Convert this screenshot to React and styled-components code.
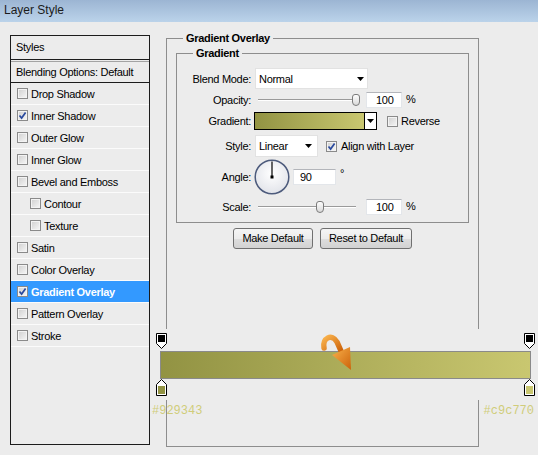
import styled, { createGlobalStyle } from 'styled-components';

const GlobalStyle = createGlobalStyle`
  html, body {
    margin: 0;
    padding: 0;
  }
  body {
    background: #ececec;
    font-family: "Liberation Sans", Arial, sans-serif;
    font-size: 11px;
    letter-spacing: -0.3px;
    color: #000;
  }
`;

const styleItems = [
  { label: 'Drop Shadow' },
  { label: 'Inner Shadow', checked: true },
  { label: 'Outer Glow' },
  { label: 'Inner Glow' },
  { label: 'Bevel and Emboss' },
  { label: 'Contour', indent: true },
  { label: 'Texture', indent: true },
  { label: 'Satin' },
  { label: 'Color Overlay' },
  { label: 'Gradient Overlay', checked: true, active: true },
  { label: 'Pattern Overlay' },
  { label: 'Stroke' },
];

const Window = styled.div`
  width: 538px;
  height: 455px;
  overflow: hidden;
  background: #ececec;
`;

const TitleBar = styled.div`
  height: 22px;
  line-height: 21px;
  padding-left: 4px;
  background: linear-gradient(#9cb5d3, #bbd3ea);
  font-size: 12px;
  letter-spacing: 0;
  color: #1b1b1b;
`;

const Content = styled.div`
  display: flex;
  align-items: flex-start;
  padding: 13px 0 0 10px;
`;

const StylesPanel = styled.div`
  width: 140px;
  height: 410px;
  box-sizing: border-box;
  border: 1px solid #1c1c1c;
`;

const PanelHeader = styled.div`
  height: 23px;
  line-height: 23px;
  padding-left: 5px;
  border-bottom: 1px solid #1c1c1c;
`;

const BlendingRow = styled.div`
  margin-top: 1px;
  height: 20px;
  line-height: 20px;
  padding-left: 5px;
  border-top: 1px solid #a3a3a3;
  border-bottom: 1px solid #1c1c1c;
`;

const StyleRow = styled.div`
  display: flex;
  align-items: center;
  gap: 3px;
  height: 21px;
  padding-left: ${(p) => (p.$indent ? 19 : 6)}px;
  border-bottom: 1px solid #fbfbfb;
  background: ${(p) => (p.$active ? '#3399ff' : 'transparent')};
  color: ${(p) => (p.$active ? '#fff' : '#000')};
  font-weight: ${(p) => (p.$active ? 'bold' : 'normal')};
`;

const Box = styled.span`
  display: inline-flex;
  align-items: center;
  justify-content: center;
  flex-shrink: 0;
  width: 11px;
  height: 11px;
  box-sizing: border-box;
  border: 1px solid #8a8a8a;
  box-shadow: inset 0 0 0 1px #f3f3f3;
  background: linear-gradient(135deg, #cfcfcf, #f7f7f7);
  margin-left: ${(p) => p.$ml || 0}px;
`;

const Checkbox = ({ checked, ml }) => (
  <Box $ml={ml}>
    {checked && (
      <svg width="9" height="9" viewBox="0 0 9 9">
        <path d="M1.5 4.5 L3.6 7 L7.6 1.4" fill="none" stroke="#2a4a9e" strokeWidth="1.7" />
      </svg>
    )}
  </Box>
);

const RightColumn = styled.div`
  margin: 3px 0 0 16px;
`;

const Group = styled.div`
  position: relative;
  box-sizing: border-box;
  width: ${(p) => p.$w}px;
  height: ${(p) => p.$h}px;
  border: 1px solid #8d8d8d;
  padding: 14px ${(p) => p.$px || 0}px 0;
`;

const Legend = styled.span`
  position: absolute;
  top: -7px;
  left: 16px;
  padding: 0 3px;
  line-height: 13px;
  background: #ececec;
  font-weight: bold;
`;

const Row = styled.div`
  display: flex;
  align-items: center;
  height: ${(p) => p.$h}px;
  margin-top: ${(p) => p.$mt || 0}px;
`;

const Label = styled.div`
  flex-shrink: 0;
  width: 74px;
  margin-right: 3px;
  text-align: right;
`;

const Select = styled.div`
  display: flex;
  align-items: center;
  justify-content: space-between;
  box-sizing: border-box;
  width: ${(p) => p.$w}px;
  height: ${(p) => p.$h}px;
  margin-left: 1px;
  padding: 0 ${(p) => p.$pr}px 0 3px;
  background: #fff;
  border: 1px solid #e2e2e2;
`;

const Arrow = () => (
  <svg width="7" height="4" viewBox="0 0 7 4">
    <polygon points="0,0 7,0 3.5,4" fill="#000" />
  </svg>
);

const Slider = styled.div`
  position: relative;
  width: 112px;
  height: 16px;
  flex-shrink: 0;
`;

const Track = styled.div`
  margin: 7px 0 0 4px;
  width: 98px;
  height: 0;
  border-top: 1px solid #9a9a9a;
  border-bottom: 1px solid #fff;
`;

const Thumb = styled.div`
  position: absolute;
  top: 2px;
  width: 8px;
  height: 12px;
  box-sizing: border-box;
  border: 1px solid #7b7b7b;
  border-radius: 3px 3px 4px 4px;
  background: linear-gradient(#fdfdfd, #d9d9d9);
`;

const Field = styled.div`
  box-sizing: border-box;
  width: ${(p) => p.$w}px;
  height: 16px;
  line-height: 14px;
  margin-left: ${(p) => p.$ml || 0}px;
  padding-left: ${(p) => p.$pl}px;
  background: #fff;
  border: 1px solid #e3e6ea;
  border-top-color: #b3b5ba;
`;

const Unit = styled.span`
  align-self: flex-start;
  margin: ${(p) => p.$mt}px 0 0 4px;
  line-height: 12px;
`;

const GradientField = styled.div`
  display: flex;
  box-sizing: border-box;
  width: 123px;
  height: 18px;
  border: 1px solid #000;
`;

const Swatch = styled.div`
  flex: 1;
  background: linear-gradient(to right, #929343, #c9c770);
  border-right: 1px solid #000;
`;

const DropButton = styled.div`
  display: flex;
  align-items: center;
  justify-content: center;
  width: 11px;
  background: #fff;
`;

const CheckLabel = styled.span`
  margin-left: ${(p) => p.$ml}px;
`;

const Buttons = styled.div`
  display: flex;
  justify-content: center;
  gap: 7px;
  margin-top: 5px;
`;

const Button = styled.div`
  box-sizing: border-box;
  width: ${(p) => p.$w}px;
  height: 21px;
  line-height: 19px;
  text-align: center;
  border: 1px solid #707070;
  border-radius: 3px;
  background: linear-gradient(#f5f5f5 0%, #ececec 50%, #dedede 51%, #d2d2d2 100%);
`;

const EditorWrap = styled.div`
  margin: 80px -68px 0 -26px;
`;

const EditorBox = styled.div`
  position: relative;
  padding: 4px 2px 4px 6px;
  background: #ececec;
`;

const StopRow = styled.div`
  display: flex;
  justify-content: space-between;
  height: ${(p) => p.$h}px;
`;

const Bar = styled.div`
  height: 28px;
  box-sizing: border-box;
  margin: 2px 4px 0 4px;
  border: 1px solid #8a8a8a;
  background: linear-gradient(to right, #929343, #c9c770);
`;

const HexRow = styled.div`
  display: flex;
  justify-content: space-between;
  margin-top: 4px;
  padding: 0 3px 0 2px;
  font-family: "Liberation Mono", "Courier New", monospace;
  font-size: 12px;
  letter-spacing: 0;
  line-height: 14px;
  color: #d0cc7a;
`;

const CurveArrow = styled.svg`
  position: absolute;
  left: 169px;
  top: 4px;
`;

const TopStop = () => (
  <svg width="11" height="16" viewBox="0 0 11 16">
    <path d="M0.5 0.5 H10.5 V10.5 L5.5 15.5 L0.5 10.5 Z" fill="#fff" stroke="#000" />
    <rect x="2" y="2" width="7" height="7" fill="#000" />
  </svg>
);

const BottomStop = ({ color }) => (
  <svg width="11" height="17" viewBox="0 0 11 17">
    <path d="M5.5 0.5 L10.5 5.5 V16.5 H0.5 V5.5 Z" fill="#fff" stroke="#000" />
    <rect x="2" y="7" width="7" height="8" fill={color} />
  </svg>
);

const Dial = () => (
  <svg width="36" height="36" viewBox="0 0 36 36">
    <defs>
      <radialGradient id="dialFill" cx="50%" cy="40%" r="60%">
        <stop offset="0%" stopColor="#ffffff" />
        <stop offset="100%" stopColor="#e2e4ea" />
      </radialGradient>
    </defs>
    <circle cx="18" cy="18" r="16.8" fill="url(#dialFill)" stroke="#4d5b7c" strokeWidth="1.5" />
    <line x1="18" y1="18" x2="18" y2="2.5" stroke="#000" strokeWidth="1.2" />
    <rect x="16.5" y="16.5" width="3" height="3" fill="#000" />
  </svg>
);

const App = () => {
  return (
    <Window>
      <GlobalStyle />
      <TitleBar>Layer Style</TitleBar>
      <Content>
        <StylesPanel>
          <PanelHeader>Styles</PanelHeader>
          <BlendingRow>Blending Options: Default</BlendingRow>
          {styleItems.map((item) => (
            <StyleRow key={item.label} $indent={item.indent} $active={item.active}>
              <Checkbox checked={item.checked} />
              <span>{item.label}</span>
            </StyleRow>
          ))}
        </StylesPanel>

        <RightColumn>
          <Group $w={313} $h={409} $px={9}>
            <Legend>Gradient Overlay</Legend>
            <Group $w={293} $h={170}>
              <Legend>Gradient</Legend>
              <Row $h={21}>
                <Label>Blend Mode:</Label>
                <Select $w={113} $h={21} $pr={3}>
                  <span>Normal</span>
                  <Arrow />
                </Select>
              </Row>
              <Row $h={16} $mt={3}>
                <Label>Opacity:</Label>
                <Slider>
                  <Track />
                  <Thumb style={{ left: 98 }} />
                </Slider>
                <Field $w={36} $pl={9}>100</Field>
                <Unit $mt={1}>%</Unit>
              </Row>
              <Row $h={18} $mt={4}>
                <Label>Gradient:</Label>
                <GradientField>
                  <Swatch />
                  <DropButton>
                    <Arrow />
                  </DropButton>
                </GradientField>
                <Checkbox ml={10} />
                <CheckLabel $ml={3}>Reverse</CheckLabel>
              </Row>
              <Row $h={22} $mt={5}>
                <Label>Style:</Label>
                <Select $w={63} $h={22} $pr={5}>
                  <span>Linear</span>
                  <Arrow />
                </Select>
                <Checkbox checked ml={8} />
                <CheckLabel $ml={4}>Align with Layer</CheckLabel>
              </Row>
              <Row $h={36} $mt={2}>
                <Label>Angle:</Label>
                <Dial />
                <Field $w={43} $ml={3} $pl={6}>90</Field>
                <Unit $mt={8}>°</Unit>
              </Row>
              <Row $h={16} $mt={4}>
                <Label>Scale:</Label>
                <Slider>
                  <Track />
                  <Thumb style={{ left: 62 }} />
                </Slider>
                <Field $w={36} $pl={9}>100</Field>
                <Unit $mt={1}>%</Unit>
              </Row>
            </Group>
            <Buttons>
              <Button $w={80}>Make Default</Button>
              <Button $w={92}>Reset to Default</Button>
            </Buttons>

            <EditorWrap>
              <EditorBox>
                <StopRow $h={16}>
                  <TopStop />
                  <TopStop />
                </StopRow>
                <Bar />
                <StopRow $h={17}>
                  <BottomStop color="#929343" />
                  <BottomStop color="#c9c770" />
                </StopRow>
                <CurveArrow width="38" height="42" viewBox="0 0 38 42">
                  <defs>
                    <linearGradient id="arrowFill" x1="0" y1="0" x2="1" y2="1">
                      <stop offset="0%" stopColor="#f9b24c" />
                      <stop offset="100%" stopColor="#cc620a" />
                    </linearGradient>
                  </defs>
                  <path
                    d="M5 15 C3 5, 13 0, 18 9 L22 18"
                    fill="none"
                    stroke="url(#arrowFill)"
                    strokeWidth="5.5"
                    strokeLinecap="round"
                  />
                  <polygon points="13,22 31,14 32,37" fill="url(#arrowFill)" />
                </CurveArrow>
              </EditorBox>
              <HexRow>
                <span>#929343</span>
                <span>#c9c770</span>
              </HexRow>
            </EditorWrap>
          </Group>
        </RightColumn>
      </Content>
    </Window>
  );
};

export default App;
